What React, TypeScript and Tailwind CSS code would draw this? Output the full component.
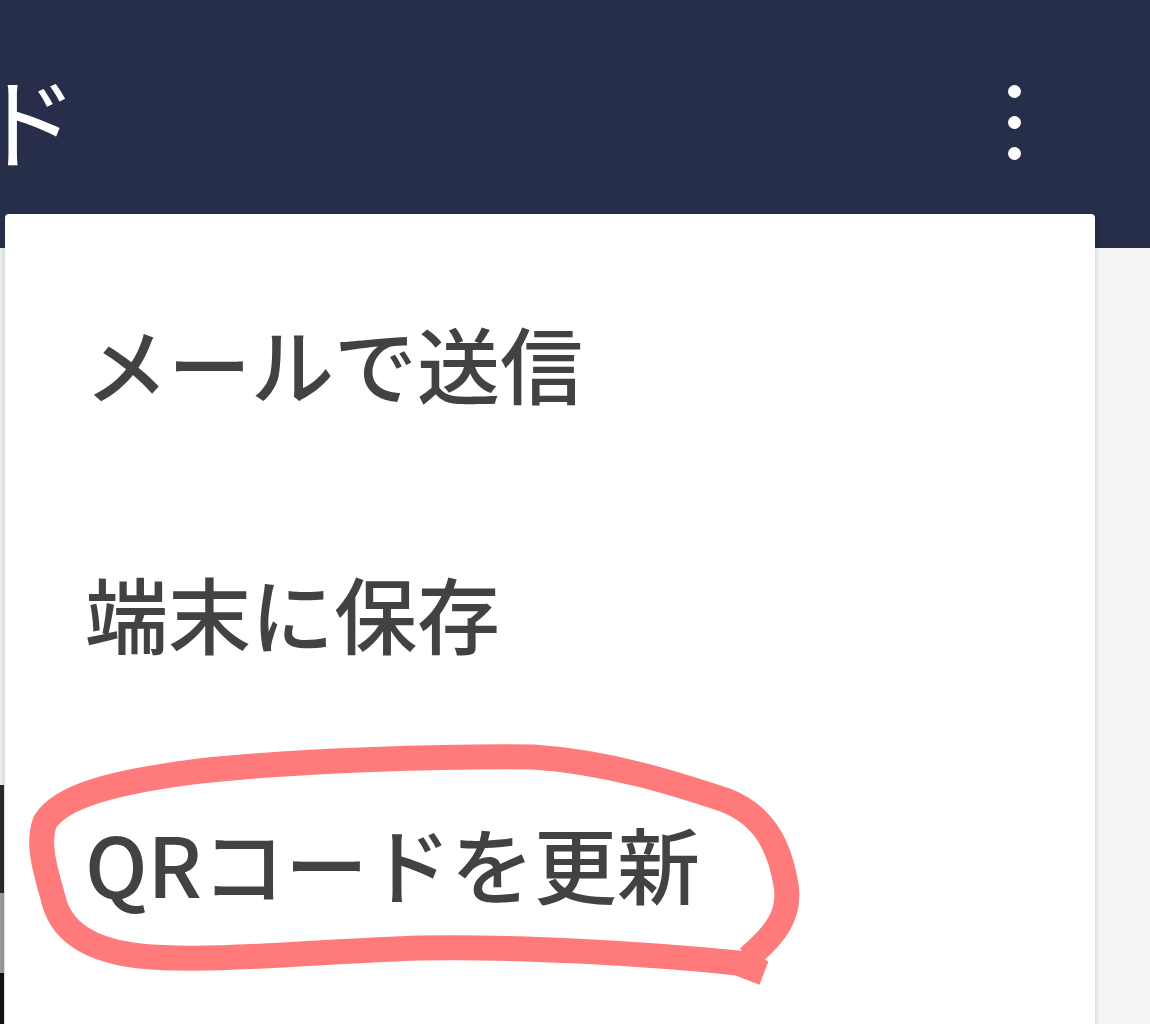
import React from 'react';

const menuItems = ['メールで送信', '端末に保存', 'QRコードを更新'];

export const App: React.FC = () => {
  return (
    <div
      className="relative h-[1024px] w-[1150px] overflow-hidden bg-[#f5f5f5]"
      style={{ fontFamily: '"Noto Sans CJK JP", "Noto Sans", sans-serif' }}
    >
      {/* Header */}
      <header className="flex h-[248px] items-center justify-between bg-[#262e4a] pr-[129px]">
        <div className="ml-[-22px] pb-[12px] text-[100px] leading-none text-white">ド</div>
        <div className="flex flex-col items-center gap-[18px] pb-[4px]">
          <span className="block h-[13px] w-[13px] rounded-full bg-white" />
          <span className="block h-[13px] w-[13px] rounded-full bg-white" />
          <span className="block h-[13px] w-[13px] rounded-full bg-white" />
        </div>
      </header>

      {/* Page content peeking on the left */}
      <div className="flex h-[776px] w-[5px] flex-col bg-[#f0f0f0]">
        <div className="h-[537px]" />
        <div className="h-[108px] w-[4px] bg-[#2a2a2a]" />
        <div className="h-[80px] w-[4px] bg-[#9a9a9a]" />
        <div className="w-[4px] flex-1 bg-[#111]" />
      </div>

      {/* Dropdown menu */}
      <div className="absolute left-[5px] top-[214px] h-[900px] w-[1090px] rounded-[4px] bg-white pt-[23px] shadow-[0_2px_6px_rgba(0,0,0,0.18)]">
        {menuItems.map((label) => (
          <div
            key={label}
            className="flex h-[250px] items-center pl-[80px] text-[83px] font-medium leading-none text-[#424242]"
          >
            {label}
          </div>
        ))}
      </div>

      {/* Hand-drawn highlight */}
      <svg
        className="pointer-events-none absolute left-0 top-0"
        width="1150"
        height="1024"
        viewBox="0 0 1150 1024"
        fill="none"
      >
        <path
          d="M 764 973 L 738 963 C 650 954, 520 946, 420 948 C 320 951, 210 963, 140 956 C 95 951, 65 935, 55 905 C 47 875, 36 845, 45 822 C 60 797, 110 782, 200 771 C 300 760, 450 756, 533 757 C 610 762, 680 785, 725 800 C 765 815, 780 848, 786 885 C 791 915, 775 935, 748 958"
          stroke="#ff7b7b"
          strokeWidth="25"
          strokeLinejoin="round"
          strokeLinecap="butt"
        />
      </svg>
    </div>
  );
};

export default App;
